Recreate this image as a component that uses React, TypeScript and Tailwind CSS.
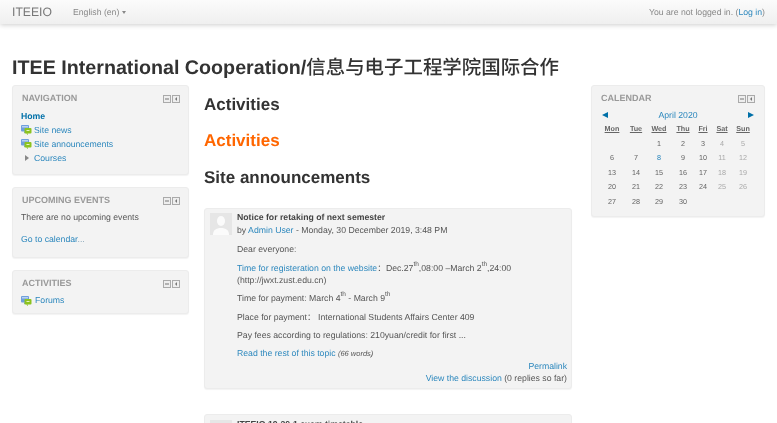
import React from "react";

const Ctl = () => (
  <div className="flex gap-[1px] mt-[1px]">
    <svg width="8" height="8" viewBox="0 0 8 8"><rect x="0.5" y="0.5" width="7" height="7" fill="#eeeeee" stroke="#aaa" /><rect x="2" y="3.5" width="4" height="1" fill="#777" /></svg>
    <svg width="8" height="8" viewBox="0 0 8 8"><rect x="0.5" y="0.5" width="7" height="7" fill="#eeeeee" stroke="#aaa" /><path d="M5 2v4L3 4z" fill="#777" /></svg>
  </div>
);

const ForumIcon = () => (
  <svg width="11" height="10" viewBox="0 0 11 10" className="shrink-0">
    <rect x="0" y="0" width="8" height="6.5" rx="1" fill="#6f9fdc" />
    <rect x="1" y="1" width="6" height="1.5" fill="#b9d2f0" />
    <path d="M3 6.5v2l2-2z" fill="#6f9fdc" />
    <rect x="3.5" y="3" width="7" height="5.5" rx="1" fill="#8cc320" />
    <path d="M7 8.5v1.5l-2-1.5z" fill="#8cc320" />
    <rect x="5.5" y="5" width="3" height="1" fill="#e4f3c2" />
  </svg>
);

const Block = ({ title, className = "", children }: { title: string; className?: string; children: React.ReactNode }) => (
  <div className={`bg-[#f3f3f3] border border-[#ececec] rounded-[3px] shadow-[0_1px_1px_rgba(0,0,0,0.05)] px-[8px] pt-[7px] ${className}`}>
    <div className="flex justify-between items-center h-[11px] pl-[1px]">
      <span className="text-[9px] font-bold text-[#999] leading-[11px]">{title}</span>
      <Ctl />
    </div>
    {children}
  </div>
);

const L = ({ children, className = "" }: { children: React.ReactNode; className?: string }) => (
  <span className={`text-[#2b87bd] ${className}`}>{children}</span>
);

const Th = () => <sup className="text-[6.5px] leading-none -top-[5px]">th</sup>;

const days: [string, string][] = [
  ["", ""], ["", ""], ["1", ""], ["2", ""], ["3", ""], ["4", "w"], ["5", "w"],
  ["6", ""], ["7", ""], ["8", "t"], ["9", ""], ["10", ""], ["11", "w"], ["12", "w"],
  ["13", ""], ["14", ""], ["15", ""], ["16", ""], ["17", ""], ["18", "w"], ["19", "w"],
  ["20", ""], ["21", ""], ["22", ""], ["23", ""], ["24", ""], ["25", "w"], ["26", "w"],
  ["27", ""], ["28", ""], ["29", ""], ["30", ""], ["", ""], ["", ""], ["", ""],
];

const Avatar = () => (
  <svg width="22" height="22" viewBox="0 0 22 22" className="shrink-0">
    <rect width="22" height="22" fill="#e6e6e6" />
    <ellipse cx="11" cy="8" rx="4" ry="5" fill="#fbfbfb" />
    <path d="M3 22c0-5 3-7 8-7s8 2 8 7z" fill="#fbfbfb" />
  </svg>
);

export default function App() {
  return (
    <div className="w-[777px] h-[423px] overflow-hidden bg-white text-[#555] text-[8.7px] leading-[13px] blur-[0.35px] [text-rendering:geometricPrecision] font-['Liberation_Sans','Noto_Sans_CJK_SC',sans-serif]">
      <div className="h-[24px] bg-gradient-to-b from-[#fbfbfb] to-[#efefef] shadow-[0_1px_5px_rgba(0,0,0,0.2)] flex items-center pl-[12px] pr-[12px]">
        <span className="text-[12.2px] text-[#777]">ITEEIO</span>
        <span className="ml-[21px] text-[#888] flex items-center gap-[3px]">English (en)<span className="w-0 h-0 border-x-[2.5px] border-x-transparent border-t-[3px] border-t-[#888]" /></span>
        <span className="ml-auto text-[#888]">You are not logged in. (<L className="text-[#1e77ad]">Log in</L>)</span>
      </div>

      <h1 className="mt-[32px] ml-[12px] text-[19.7px] leading-[24px] font-bold text-[#333] whitespace-nowrap">ITEE International Cooperation/<span className="text-[19.45px] font-medium">信息与电子工程学院国际合作</span></h1>

      <div className="flex mt-[5px] pl-[12px]">
        <div className="w-[177px] shrink-0 flex flex-col gap-[12px]">
          <Block title="NAVIGATION" className="h-[90px]">
            <div className="mt-[5px] flex flex-col leading-[14px]">
              <span className="font-bold text-[#0070a8]">Home</span>
              <div className="flex items-center gap-[2px]"><ForumIcon /><L>Site news</L></div>
              <div className="flex items-center gap-[2px]"><ForumIcon /><L>Site announcements</L></div>
              <div className="flex items-center gap-[2px]">
                <span className="w-[11px] flex justify-center"><span className="w-0 h-0 border-y-[3.5px] border-y-transparent border-l-[4px] border-l-[#888]" /></span>
                <L>Courses</L>
              </div>
            </div>
          </Block>
          <Block title="UPCOMING EVENTS" className="h-[71px]">
            <div className="mt-[5px]">There are no upcoming events</div>
            <div className="mt-[9px]"><L>Go to calendar</L><span className="text-[#8aa8bb]">...</span></div>
          </Block>
          <Block title="ACTIVITIES" className="h-[44px]">
            <div className="mt-[5px] flex items-center gap-[3px]"><ForumIcon /><L>Forums</L></div>
          </Block>
        </div>

        <div className="w-[368px] ml-[15px] shrink-0">
          <h2 className="text-[17px] leading-[22px] font-bold text-[#333] mt-[9px]">Activities</h2>
          <h2 className="text-[17px] leading-[22px] font-bold text-[#f60] mt-[14px]">Activities</h2>
          <h2 className="text-[17px] leading-[22px] font-bold text-[#333] mt-[15px]">Site announcements</h2>

          <div className="mt-[19px] h-[181px] bg-[#f3f3f3] border border-[#ececec] rounded-[3px] shadow-[0_1px_1px_rgba(0,0,0,0.05)] pl-[5px] pr-[4px] pt-[4px]">
            <div className="flex gap-[5px]">
              <Avatar />
              <div className="grow leading-[12.5px] -mt-[2px]">
                <div className="font-bold text-[#444]">Notice for retaking of next semester</div>
                <div>by <L>Admin User</L> - Monday, 30 December 2019, 3:48 PM</div>
              </div>
            </div>
            <div className="pl-[27px]">
              <p className="mt-[7px] leading-[13px]">Dear everyone:</p>
              <p className="mt-[5.5px] leading-[12.5px]"><L>Time for registeration on the website</L>：Dec.27<Th />,08:00 –March 2<Th />,24:00<br />(http://jwxt.zust.edu.cn)</p>
              <p className="mt-[5.5px] leading-[13px]">Time for payment: March 4<Th /> - March 9<Th /></p>
              <p className="mt-[5.5px] leading-[13px]">Place for payment： International Students Affairs Center 409</p>
              <p className="mt-[5.5px] leading-[13px]">Pay fees according to regulations: 210yuan/credit for first ...</p>
              <p className="mt-[5px] leading-[13px]"><L>Read the rest of this topic</L> <em className="text-[7.5px]">(66 words)</em></p>
            </div>
            <div className="text-right -mt-[0.5px] leading-[12px]">
              <div><L>Permalink</L></div>
              <div><L>View the discussion</L> (0 replies so far)</div>
            </div>
          </div>

          <div className="mt-[25px] h-[60px] bg-[#f3f3f3] border border-[#ececec] rounded-[3px] pl-[5px] pt-[5px] flex gap-[5px]">
            <Avatar />
            <div className="font-bold text-[#444] leading-[12px] -mt-[2px]">ITEEIO 19-20-1 exam timetable</div>
          </div>
        </div>

        <div className="w-[174px] ml-[19px] shrink-0">
          <Block title="CALENDAR" className="h-[132px] pr-[9px]">
            <div className="flex justify-between items-center mt-[5px] h-[12px] pl-[2px] pr-[1px]">
              <span className="w-0 h-0 border-y-[3px] border-y-transparent border-r-[6px] border-r-[#0070a8]" />
              <L>April 2020</L>
              <span className="w-0 h-0 border-y-[3px] border-y-transparent border-l-[6px] border-l-[#0070a8]" />
            </div>
            <div className="grid grid-cols-[24px_24px_22px_26px_14px_24px_18px] mt-[1px] text-[7.2px] text-center">
              {["Mon", "Tue", "Wed", "Thu", "Fri", "Sat", "Sun"].map((d) => (
                <span key={d} className="font-bold text-[#666] underline leading-[14.5px]">{d}</span>
              ))}
              {days.map(([d, k], i) => (
                <span key={i} className={`leading-[14.5px] ${k === "w" ? "text-[#aaa]" : k === "t" ? "text-[#2b87bd]" : "text-[#666]"}`}>{d}</span>
              ))}
            </div>
          </Block>
        </div>
      </div>
    </div>
  );
}
